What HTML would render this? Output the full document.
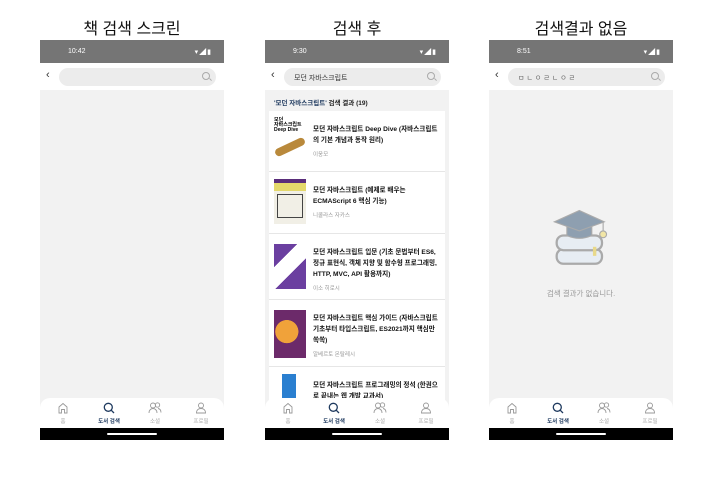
<!DOCTYPE html>
<html><head><meta charset="utf-8"><style>
*{margin:0;padding:0;box-sizing:border-box}
body{width:714px;height:480px;background:#fff;position:relative;overflow:hidden;font-family:"Liberation Sans","Noto Sans CJK KR",sans-serif}
.title{position:absolute;top:15px;font-size:16px;color:#111;text-align:center;width:184px}
.ph{position:absolute;top:40px;width:184px;height:400px;background:#f2f2f2;overflow:hidden}
.sb{position:absolute;top:0;left:0;right:0;height:23px;background:#757575;color:#fff;font-size:7px}
.sb .t{position:absolute;left:28px;top:8px}
.sb .i{position:absolute;right:12px;top:7px;font-size:7px;letter-spacing:1px}
.sr{position:absolute;top:23px;left:0;right:0;height:27px;background:#fff}
.sr .bk{position:absolute;left:6px;top:6px;font-size:11px;color:#333}
.pill{position:absolute;left:19px;top:5px;width:157px;height:18px;border-radius:9px;background:#ececec;font-size:7px;color:#333;padding:5px 0 0 10px}
.mag{position:absolute;right:6px;top:4px;width:8px;height:8px;border:1px solid #aaa;border-radius:50%}
.mag:after{content:"";position:absolute;width:3px;height:1px;background:#aaa;right:-3px;bottom:-1px;transform:rotate(45deg)}
.nav{position:absolute;top:358px;left:0;right:0;height:30px;background:#fff;border-radius:10px 10px 0 0}
.nav div{position:absolute;top:19px;font-size:5.5px;color:#aaa;width:46px;text-align:center}
.nav svg{position:absolute;top:4px}
.bar{position:absolute;top:388px;left:0;right:0;height:12px;background:#000}
.bar:after{content:"";position:absolute;left:67px;top:5px;width:50px;height:2px;background:#fff;border-radius:1px}
.hdr{position:absolute;top:52px;left:0;right:0;height:19px;background:#f2f2f2;font-size:6.5px;font-weight:bold;color:#222;padding:5px 0 0 9px}
.list{position:absolute;top:71px;left:4px;right:4px;background:#fff;height:300px}
.it{position:absolute;left:0;right:0;border-bottom:1px solid #e6e6e6}
.it .c{position:absolute;left:5px;top:7px;width:32px;height:45px}
.it .tx{position:absolute;left:44px;top:13px;right:4px;font-size:6.6px;line-height:11px;color:#111;font-weight:bold}
.it .au{font-weight:normal;color:#999;font-size:5.5px;margin-top:4px}
</style></head><body>
<div class="title" style="left:40px">책 검색 스크린</div>
<div class="title" style="left:265px">검색 후</div>
<div class="title" style="left:489px">검색결과 없음</div>

<div class="ph" style="left:40px">
<div class="sb"><span class="t">10:42</span><span class="i">▾◢▮</span></div>
<div class="sr"><span class="bk">‹</span><div class="pill"><span class="mag"></span></div></div>
NAV1
</div>

<div class="ph" style="left:265px">
<div class="sb"><span class="t">9:30</span><span class="i">▾◢▮</span></div>
<div class="sr"><span class="bk">‹</span><div class="pill">모던 자바스크립트<span class="mag"></span></div></div>
<div class="hdr"><span style="color:#1f3a5f">'모던 자바스크립트'</span> 검색 결과 (19)</div>
<div class="list">
<div class="it" style="top:0;height:61px"><div class="c" style="background:#fff"><div style="font-size:5px;font-weight:bold;line-height:5px">모던<br>자바스크립트<br>Deep Dive</div><div style="margin-top:10px;height:8px;background:#b9893b;border-radius:4px;transform:rotate(-25deg)"></div></div><div class="tx">모던 자바스크립트 Deep Dive (자바스크립트의 기본 개념과 동작 원리)<div class="au">이웅모</div></div></div>
<div class="it" style="top:61px;height:62px"><div class="c" style="background:#f1efe6;border-top:4px solid #5a2d7a"><div style="height:8px;background:#e4d86b"></div><div style="margin:3px;height:24px;border:1px solid #444"></div></div><div class="tx">모던 자바스크립트 (예제로 배우는 ECMAScript 6 핵심 기능)<div class="au">니콜라스 자카스</div></div></div>
<div class="it" style="top:123px;height:66px"><div class="c" style="top:10px;background:linear-gradient(135deg,#6b3fa0 0 30%,#fff 30% 60%,#6b3fa0 60%)"></div><div class="tx">모던 자바스크립트 입문 (기초 문법부터 ES6, 정규 표현식, 객체 지향 및 함수형 프로그래밍, HTTP, MVC, API 활용까지)<div class="au">이소 히로시</div></div></div>
<div class="it" style="top:189px;height:67px"><div class="c" style="top:10px;height:48px;background:radial-gradient(circle at 40% 45%,#f0a23a 0 35%,#6c2a6a 36%)"></div><div class="tx">모던 자바스크립트 핵심 가이드 (자바스크립트 기초부터 타입스크립트, ES2021까지 핵심만 쏙쏙)<div class="au">알베르토 몬탈레시</div></div></div>
<div class="it" style="top:256px;height:50px;border:0"><div class="c" style="background:#fff;border-left:6px solid #fff"><div style="width:14px;height:30px;background:#2a7fd0;margin-left:2px"></div></div><div class="tx">모던 자바스크립트 프로그래밍의 정석 (한권으로 끝내는 웹 개발 교과서)</div></div>
</div>
NAV2
</div>

<div class="ph" style="left:489px">
<div class="sb"><span class="t">8:51</span><span class="i">▾◢▮</span></div>
<div class="sr"><span class="bk">‹</span><div class="pill" style="letter-spacing:2px;color:#666">ㅁㄴㅇㄹㄴㅇㄹ<span class="mag"></span></div></div>
<svg style="position:absolute;left:62px;top:168px" width="68" height="64" viewBox="0 0 60 56">
<rect x="5" y="36" width="40" height="13" rx="6" fill="#e7edf3" stroke="#aaa" stroke-width="2"/>
<rect x="5" y="24" width="40" height="13" rx="6" fill="#e7edf3" stroke="#aaa" stroke-width="2"/>
<rect x="37" y="34" width="3" height="8" fill="#e8d98a"/>
<path d="M14 14 v10 q11 5 22 0 v-10z" fill="#8e9fb0" stroke="#aaa"/>
<path d="M25 2 L47 12 L25 20 L3 12z" fill="#8e9fb0" stroke="#aaa"/>
<line x1="46" y1="12" x2="46" y2="20" stroke="#aaa"/>
<circle cx="46" cy="23" r="3" fill="#f2e6a6" stroke="#aaa"/>
</svg>
<div style="position:absolute;top:248px;left:0;right:0;text-align:center;font-size:7.5px;color:#999">검색 결과가 없습니다.</div>
NAV3
</div>

<script>
var nav='<div class="nav">'+
'<svg style="left:17px" width="12" height="12" viewBox="0 0 12 12"><path d="M2 11V5L6 1.5 10 5v6H7.5V7.5h-3V11z" fill="none" stroke="#999" stroke-width="0.9"/></svg><div style="left:0">홈</div>'+
'<svg style="left:63px" width="12" height="12" viewBox="0 0 12 12"><circle cx="5.3" cy="5.3" r="4" fill="none" stroke="#1f3a5f" stroke-width="1.3"/><line x1="8.2" y1="8.2" x2="11" y2="11" stroke="#1f3a5f" stroke-width="1.3"/></svg><div style="left:46px;color:#1f3a5f;font-weight:bold">도서 검색</div>'+
'<svg style="left:108px" width="14" height="12" viewBox="0 0 14 12"><circle cx="5" cy="3.5" r="2.5" fill="none" stroke="#999" stroke-width="0.9"/><path d="M1 11c0-3 2-4.5 4-4.5s4 1.5 4 4.5" fill="none" stroke="#999" stroke-width="0.9"/><circle cx="9.5" cy="3" r="2.2" fill="none" stroke="#999" stroke-width="0.9"/><path d="M10 6.5c2 .3 3 1.8 3 4" fill="none" stroke="#999" stroke-width="0.9"/></svg><div style="left:92px">소셜</div>'+
'<svg style="left:155px" width="12" height="12" viewBox="0 0 12 12"><circle cx="6" cy="3.5" r="2.5" fill="none" stroke="#999" stroke-width="0.9"/><path d="M1.5 11c0-3 2-4.5 4.5-4.5s4.5 1.5 4.5 4.5z" fill="none" stroke="#999" stroke-width="0.9"/></svg><div style="left:138px">프로필</div>'+
'</div><div class="bar"></div>';
document.body.innerHTML=document.body.innerHTML.replace(/NAV[123]/g,nav);
</script>
</body></html>
